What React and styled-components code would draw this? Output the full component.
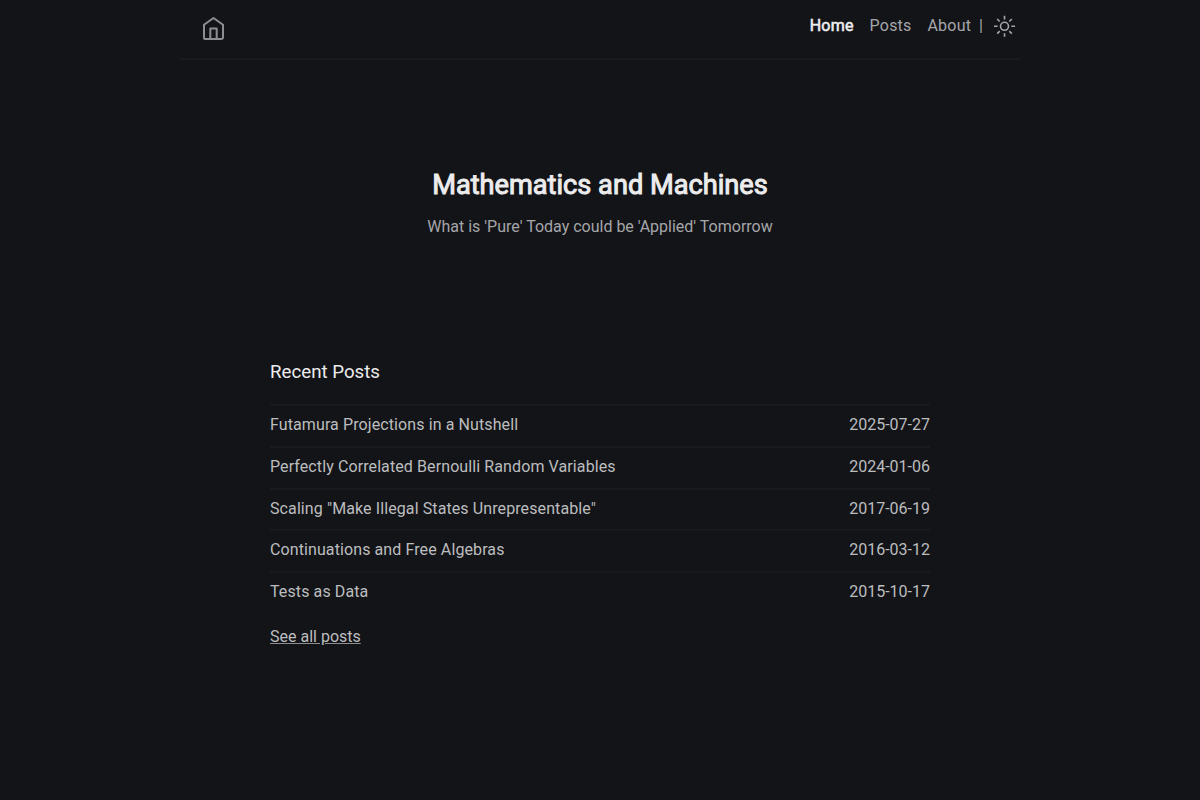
import React from "react";
import styled, { createGlobalStyle } from "styled-components";

const GlobalStyle = createGlobalStyle`
  * {
    box-sizing: border-box;
  }
  body {
    margin: 0;
    min-height: 100vh;
    background: #131418;
    color: #bcbdbf;
    font: 16px/24px Roboto, sans-serif;
  }
  a {
    color: inherit;
    text-decoration: none;
  }
`;

const Header = styled.header`
  width: 840px;
  height: 60px;
  margin: 0 auto;
  padding: 0 3px 0 20px;
  display: flex;
  justify-content: space-between;
  border-bottom: 2px solid #191a1e;
`;

const HomeLink = styled.a`
  padding-top: 15px;
  color: #8d8e92;
`;

const Nav = styled.nav`
  display: flex;
  padding-top: 14px;
  color: #a5a6a9;
`;

const NavLink = styled.a`
  margin-right: ${(p) => (p.$last ? "8px" : "16px")};
  letter-spacing: 0.2px;
  color: ${(p) => (p.$active ? "#ececed" : "inherit")};
  -webkit-text-stroke: ${(p) => (p.$active ? "0.6px" : "0")};
`;

const ThemeButton = styled.button`
  display: flex;
  height: 24px;
  margin-left: 10px;
  padding: 0;
  border: 0;
  background: none;
  color: #a5a6a9;
`;

const Hero = styled.section`
  padding-top: 107px;
  text-align: center;
  color: #a5a6a9;
`;

const Title = styled.h1`
  margin: 0 0 12px;
  font-size: 27.2px;
  line-height: 36px;
  font-weight: 400;
  color: #ececed;
  -webkit-text-stroke: 1px;
`;

const Tagline = styled.p`
  margin: 0;
`;

const Recent = styled.main`
  width: 660px;
  margin: 121px auto 0;
`;

const Heading = styled.h2`
  margin: 0 0 20px;
  font-size: 18.72px;
  line-height: 24px;
  font-weight: 400;
  color: #ececed;
`;

const Row = styled.a`
  display: flex;
  justify-content: space-between;
  height: 41.75px;
  padding-top: 7px;
  border-top: 2px solid #191a1e;
`;

const PostTitle = styled.span`
  letter-spacing: 0.1px;
`;

const AllPosts = styled.a`
  display: inline-block;
  margin-top: 12px;
  && {
    text-decoration: underline #8d8e92;
  }
`;

const posts = [
  { title: "Futamura Projections in a Nutshell", date: "2025-07-27" },
  { title: "Perfectly Correlated Bernoulli Random Variables", date: "2024-01-06" },
  { title: 'Scaling "Make Illegal States Unrepresentable"', date: "2017-06-19" },
  { title: "Continuations and Free Algebras", date: "2016-03-12" },
  { title: "Tests as Data", date: "2015-10-17" },
];

function HomeIcon() {
  return (
    <svg width="27" height="27" viewBox="0 0 27 27" fill="none" stroke="currentColor" strokeWidth="2" strokeLinejoin="round">
      <path d="M4 9.8 13.5 3 23 9.8V22.4a1.7 1.7 0 0 1-1.7 1.7H5.7A1.7 1.7 0 0 1 4 22.4z" />
      <path d="M10.3 24V13.4h6.4V24" />
    </svg>
  );
}

function SunIcon() {
  return (
    <svg width="24" height="24" viewBox="0 0 24 24" fill="none" stroke="currentColor" strokeWidth="1.6">
      <circle cx="11.5" cy="12.3" r="4" />
      <path d="M11.5 1.8v3.6M11.5 19.2v3.6M1 12.3h3.6M18.4 12.3H22M4.2 5l2.5 2.5M16.3 17.1l2.5 2.5M4.2 19.6l2.5-2.5M16.3 7.5 18.8 5" />
    </svg>
  );
}

export default function App() {
  return (
    <>
      <GlobalStyle />
      <Header>
        <HomeLink href="#" aria-label="Home">
          <HomeIcon />
        </HomeLink>
        <Nav>
          <NavLink href="#" $active>Home</NavLink>
          <NavLink href="#posts">Posts</NavLink>
          <NavLink href="#about" $last>About</NavLink>
          <span>|</span>
          <ThemeButton aria-label="Toggle theme">
            <SunIcon />
          </ThemeButton>
        </Nav>
      </Header>
      <Hero>
        <Title>Mathematics and Machines</Title>
        <Tagline>What is 'Pure' Today could be 'Applied' Tomorrow</Tagline>
      </Hero>
      <Recent>
        <Heading>Recent Posts</Heading>
        {posts.map((post) => (
          <Row href="#" key={post.date}>
            <PostTitle>{post.title}</PostTitle>
            <time>{post.date}</time>
          </Row>
        ))}
        <AllPosts href="#posts">See all posts</AllPosts>
      </Recent>
    </>
  );
}
